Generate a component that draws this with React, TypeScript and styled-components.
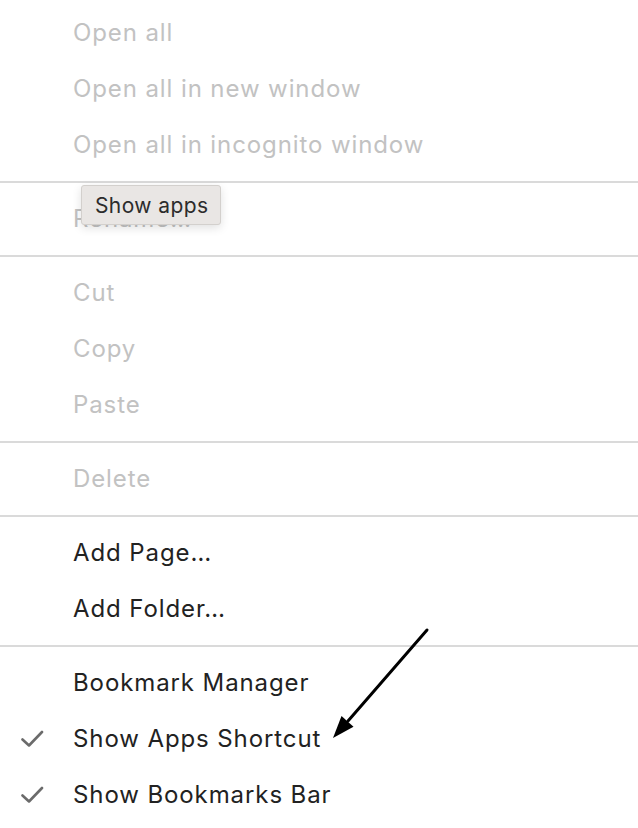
import styled, { createGlobalStyle } from "styled-components";

const GlobalStyle = createGlobalStyle`
  body {
    margin: 0;
    background: #fff;
    font-family: Inter, "Noto Sans", "Liberation Sans", sans-serif;
  }
`;

type Entry =
  | { kind: "item"; label: string; disabled?: boolean; checked?: boolean }
  | { kind: "sep" };

const entries: Entry[] = [
  { kind: "item", label: "Open all", disabled: true },
  { kind: "item", label: "Open all in new window", disabled: true },
  { kind: "item", label: "Open all in incognito window", disabled: true },
  { kind: "sep" },
  { kind: "item", label: "Rename…", disabled: true },
  { kind: "sep" },
  { kind: "item", label: "Cut", disabled: true },
  { kind: "item", label: "Copy", disabled: true },
  { kind: "item", label: "Paste", disabled: true },
  { kind: "sep" },
  { kind: "item", label: "Delete", disabled: true },
  { kind: "sep" },
  { kind: "item", label: "Add Page…" },
  { kind: "item", label: "Add Folder…" },
  { kind: "sep" },
  { kind: "item", label: "Bookmark Manager" },
  { kind: "item", label: "Show Apps Shortcut", checked: true },
  { kind: "item", label: "Show Bookmarks Bar", checked: true },
];

const Check = () => (
  <svg width="24" height="20" viewBox="0 0 24 20" fill="none">
    <path
      d="M1.5 10.5 L8 16.5 L21 3"
      stroke="#6b6b6b"
      strokeWidth="2.6"
      strokeLinecap="round"
      strokeLinejoin="round"
    />
  </svg>
);

const App = () => {
  return (
    <Page>
      <GlobalStyle />
      <Menu>
        {entries.map((e, i) =>
          e.kind === "sep" ? (
            <Separator key={i} />
          ) : (
            <Item key={i} $disabled={e.disabled}>
              <CheckSlot>{e.checked && <Check />}</CheckSlot>
              <Label>{e.label}</Label>
            </Item>
          )
        )}
      </Menu>
      <Tooltip>Show apps</Tooltip>
      <Arrow width="120" height="130" viewBox="0 0 120 130">
        <line x1="107" y1="10" x2="28" y2="101" stroke="#000" strokeWidth="3" strokeLinecap="round" />
        <polygon points="13,118 33.5,106.7 21.5,96.1" fill="#000" />
      </Arrow>
    </Page>
  );
};

export default App;

const Page = styled.div`
  position: relative;
  width: 638px;
  height: 828px;
  overflow: hidden;
  background: #fff;
`;

const Menu = styled.div`
  display: flex;
  flex-direction: column;
  padding-top: 5px;
`;

const Item = styled.div<{ $disabled?: boolean }>`
  display: grid;
  grid-template-columns: 73px 1fr;
  align-items: center;
  height: 56px;
  color: ${({ $disabled }) => ($disabled ? "#c2c2c2" : "#222")};
  font-size: 24px;
  letter-spacing: 0.9px;
  line-height: 56px;
`;

const CheckSlot = styled.div`
  display: flex;
  align-items: center;
  padding-left: 21px;
  height: 56px;
`;

const Label = styled.span`
  white-space: nowrap;
`;

const Separator = styled.div`
  height: 18px;
  display: flex;
  align-items: center;

  &::after {
    content: "";
    flex: 1;
    height: 2px;
    background: #dadada;
  }
`;

const Tooltip = styled.div`
  position: absolute;
  left: 81px;
  top: 185px;
  width: 140px;
  height: 40px;
  box-sizing: border-box;
  padding-left: 13px;
  display: flex;
  align-items: center;
  background: #e9e6e4;
  border: 1px solid #d3d0cd;
  border-radius: 3px;
  box-shadow: 0 3px 10px rgba(0, 0, 0, 0.12);
  color: #2c2c2c;
  font-size: 21px;
  letter-spacing: 0.4px;
`;

const Arrow = styled.svg`
  position: absolute;
  left: 320px;
  top: 620px;
`;
